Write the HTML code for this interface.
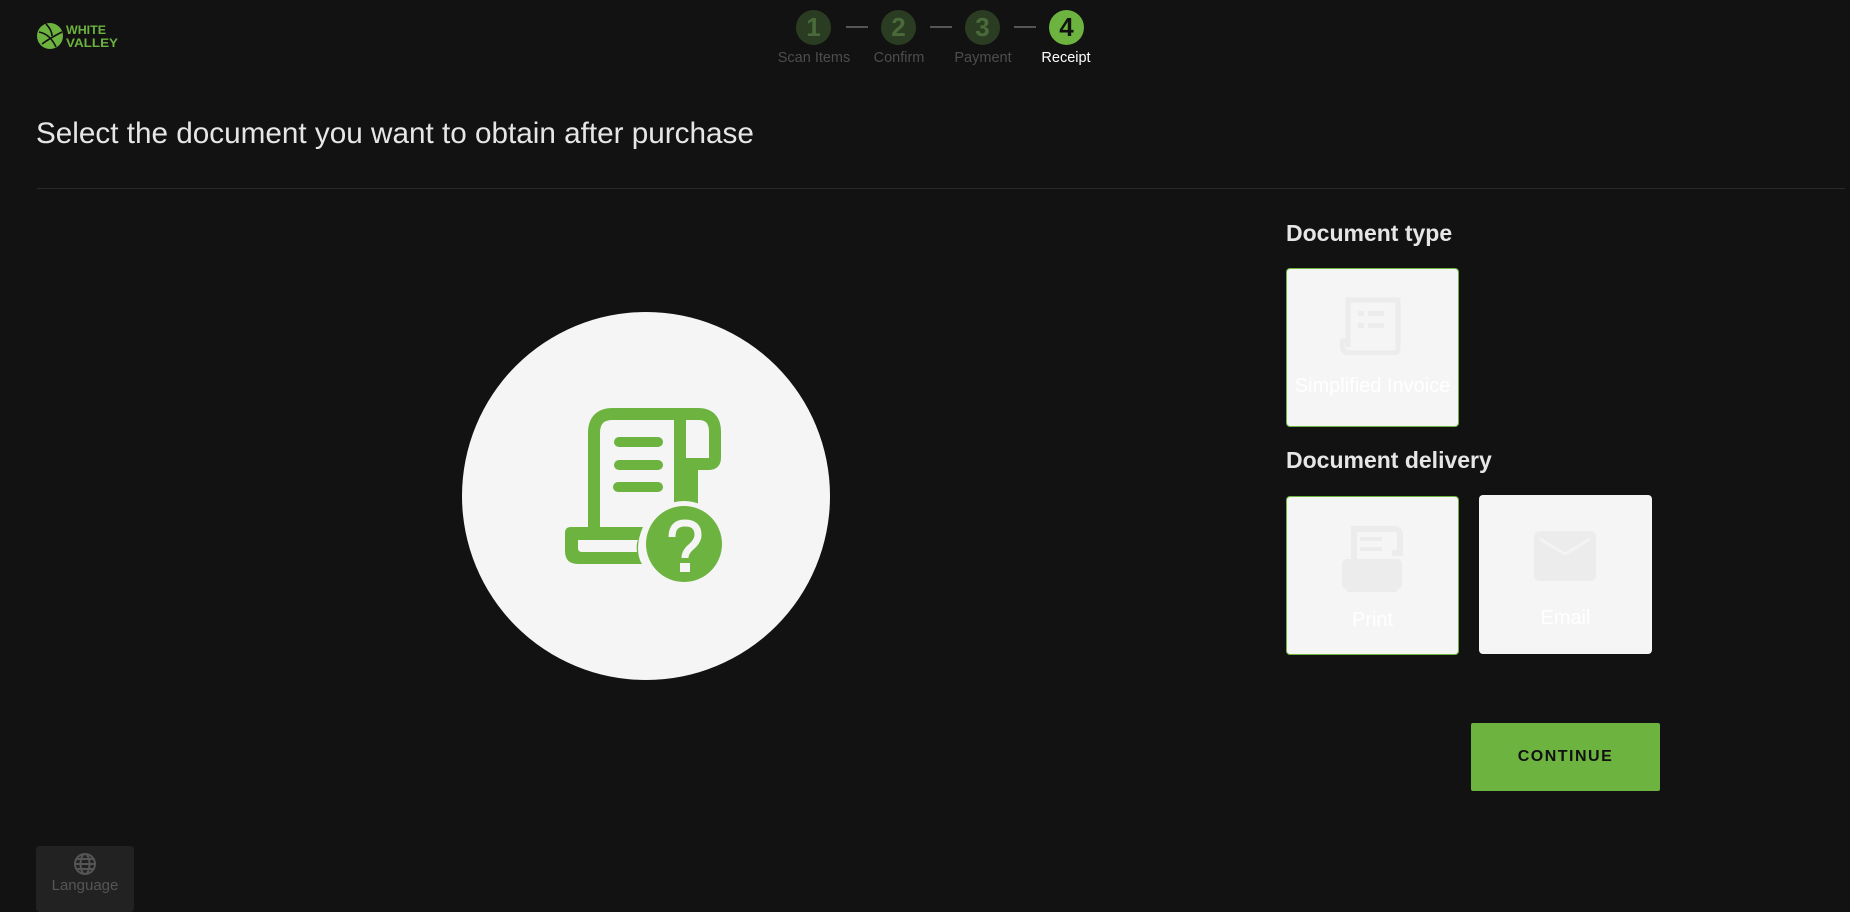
<!DOCTYPE html>
<html><head><meta charset="utf-8"><style>
*{margin:0;padding:0;box-sizing:border-box}
body{width:1850px;height:908px;background:#121212;font-family:"Liberation Sans",sans-serif;position:relative;overflow:hidden;color:#e6e6e6}
.abs{position:absolute}
.step{position:absolute;top:10px;width:35px;height:35px;border-radius:50%;background:#2a3d22;color:#4a6a3a;font-size:26px;font-weight:bold;text-align:center;line-height:35px}
.lbl{position:absolute;top:50px;font-size:14.5px;color:#4d4d4d;width:100px;text-align:center}
.dash{position:absolute;top:26px;width:22px;height:2px;background:#555}
.card{position:absolute;width:173px;height:159px;background:#f5f5f5;border-radius:4px}
.sel{border:1.5px solid #6db33f}
.ctext{position:absolute;left:0;right:0;text-align:center;color:#fff;font-size:20px}
</style></head><body>
<svg class="abs" style="left:36px;top:20px" width="90" height="32" viewBox="0 0 90 32">
<circle cx="14" cy="16" r="13" fill="#6db33f"/>
<path d="M3 12 Q14 14 20 27 M6 24 Q14 18 26 12 M10 4 Q16 10 16 16" stroke="#121212" stroke-width="1.6" fill="none"/>
<text x="30" y="14" font-family="Liberation Sans" font-weight="bold" font-size="12" fill="#6db33f" textLength="40" lengthAdjust="spacingAndGlyphs">WHITE</text>
<text x="30" y="27" font-family="Liberation Sans" font-weight="bold" font-size="12" fill="#6db33f" textLength="52" lengthAdjust="spacingAndGlyphs">VALLEY</text>
</svg>
<div class="step" style="left:796px">1</div>
<div class="step" style="left:881px">2</div>
<div class="step" style="left:965px">3</div>
<div class="step" style="left:1049px;background:#6db33f;color:#111">4</div>
<div class="dash" style="left:846px"></div><div class="dash" style="left:930px"></div><div class="dash" style="left:1014px"></div>
<div class="lbl" style="left:764px">Scan Items</div>
<div class="lbl" style="left:849px">Confirm</div>
<div class="lbl" style="left:933px">Payment</div>
<div class="lbl" style="left:1016px;color:#fff">Receipt</div>
<div class="abs" style="left:36px;top:117px;font-size:29.7px;color:#e6e6e6">Select the document you want to obtain after purchase</div>
<div class="abs" style="left:37px;top:188px;width:1808px;height:1px;background:#2a2a2a"></div>
<div class="abs" style="left:462px;top:312px;width:368px;height:368px;border-radius:50%;background:#f5f5f5"></div>
<svg class="abs" style="left:558px;top:408px" width="170" height="180" viewBox="0 0 170 180">
<path d="M36 148 V25 Q36 6 55 6 H140 Q157 6 157 24 V50 Q157 56 151 56 H134 V122" fill="none" stroke="#6db33f" stroke-width="12"/>
<path d="M122 6 V124" stroke="#6db33f" stroke-width="12"/>
<path d="M36 119 H85 Q80 130 80 140 Q80 150 84 156 H20 Q7 156 7 143 V125 Q7 119 13 119 Z" fill="#6db33f"/>
<path d="M20 132 V140 Q20 144 24 144 H79 Q78 136 80 132 Z" fill="#f5f5f5"/>
<line x1="61" y1="34" x2="100" y2="34" stroke="#6db33f" stroke-width="10" stroke-linecap="round"/>
<line x1="61" y1="57" x2="100" y2="57" stroke="#6db33f" stroke-width="10" stroke-linecap="round"/>
<line x1="60" y1="79" x2="100" y2="79" stroke="#6db33f" stroke-width="10" stroke-linecap="round"/>
<circle cx="126" cy="136" r="43" fill="#f5f5f5"/>
<circle cx="126" cy="136" r="38" fill="#6db33f"/>
<path d="M114 129 Q114 115 127 115 Q140 115 140 127 Q140 133 133 139 Q127 144 127 150" fill="none" stroke="#f5f5f5" stroke-width="7"/>
<rect x="122" y="155" width="10" height="9" fill="#f5f5f5"/>
</svg>
<div class="abs" style="left:1286px;top:220px;font-size:23px;font-weight:bold;color:#e6e6e6">Document type</div>
<div class="card sel" style="left:1286px;top:268px">
<svg class="abs" style="left:53px;top:28px" width="62" height="58" viewBox="0 0 62 58"><path d="M8 50 V3 H58 V52 Q58 56 54 56 H10 Q2 56 2 48 V44 H8" fill="none" stroke="#ececec" stroke-width="5"/><rect x="18" y="14" width="6" height="5" fill="#ececec"/><rect x="28" y="14" width="16" height="5" fill="#ececec"/><rect x="18" y="26" width="6" height="5" fill="#ececec"/><rect x="28" y="26" width="16" height="5" fill="#ececec"/></svg>
<div class="ctext" style="top:106px">Simplified Invoice</div></div>
<div class="abs" style="left:1286px;top:447px;font-size:23px;font-weight:bold;color:#e6e6e6">Document delivery</div>
<div class="card sel" style="left:1286px;top:496px">
<svg class="abs" style="left:55px;top:28px" width="64" height="68" viewBox="0 0 64 68"><path d="M12 34 V4 H52 Q58 4 58 10 V28 H50" fill="none" stroke="#ececec" stroke-width="6"/><rect x="0" y="34" width="60" height="30" rx="5" fill="#ececec"/><rect x="5" y="60" width="50" height="7" fill="#ececec"/><rect x="18" y="12" width="22" height="4" fill="#ececec"/><rect x="18" y="22" width="22" height="4" fill="#ececec"/></svg>
<div class="ctext" style="top:112px">Print</div></div>
<div class="card" style="left:1479px;top:495px">
<svg class="abs" style="left:55px;top:36px" width="62" height="50" viewBox="0 0 62 50"><rect x="0" y="0" width="62" height="50" rx="6" fill="#ececec"/><path d="M6 8 L31 23 L56 8" fill="none" stroke="#f3f3f3" stroke-width="3"/></svg>
<div class="ctext" style="top:112px">Email</div></div>
<div class="abs" style="left:1471px;top:723px;width:189px;height:68px;background:#6db33f;border-radius:2px;color:#111;font-size:16px;font-weight:bold;letter-spacing:1.5px;text-align:center;line-height:68px">CONTINUE</div>
<div class="abs" style="left:36px;top:846px;width:98px;height:66px;background:#222;border-radius:4px">
<svg class="abs" style="left:37px;top:6px" width="24" height="24" viewBox="0 0 24 24" fill="none" stroke="#555" stroke-width="2"><circle cx="12" cy="12" r="10"/><ellipse cx="12" cy="12" rx="4.5" ry="10"/><line x1="2" y1="12" x2="22" y2="12"/><line x1="4" y1="7" x2="20" y2="7"/><line x1="4" y1="17" x2="20" y2="17"/></svg>
<div class="abs" style="left:0;right:0;top:31px;text-align:center;font-size:15px;color:#555">Language</div></div>
</body></html>
